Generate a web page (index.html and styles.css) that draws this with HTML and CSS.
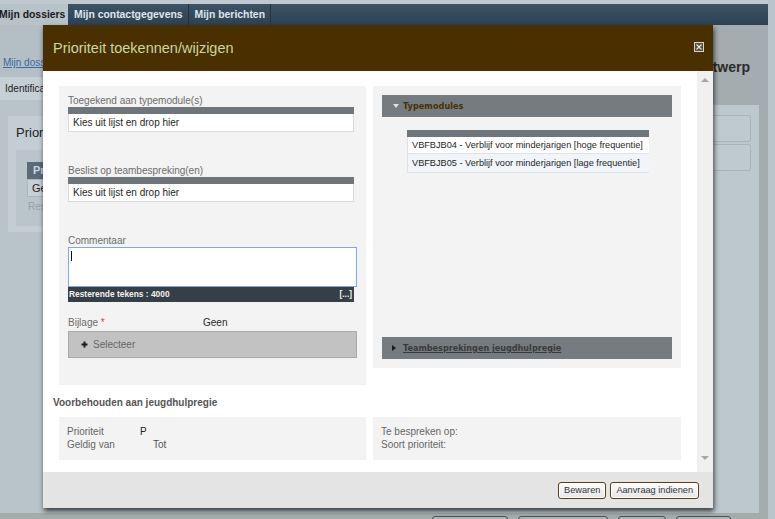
FILE: index.html
```html
<!DOCTYPE html>
<html lang="nl">
<head>
<meta charset="utf-8">
<title>Prioriteit toekennen/wijzigen</title>
<link rel="stylesheet" href="styles.css">
</head>
<body>
<div class="app">
  <div class="topstrip"></div>
  <nav class="nav">
    <span class="tab tab-active">Mijn dossiers</span>
    <span class="tab">Mijn contactgegevens</span>
    <span class="tab">Mijn berichten</span>
  </nav>
  <div class="content">
    <div class="maincol">
      <div class="crumbs"><a class="crumb-link">Mijn dossiers</a></div>
      <div class="subtabs"><span class="subtab">Identificatie</span></div>
      <section class="bgpanel">
        <h2 class="bgpanel-title">Prioriteit</h2>
        <div class="bgcard">
          <div class="bgth">Pr</div>
          <div class="bgtd">Ge</div>
          <div class="bgnote">Res</div>
        </div>
      </section>
    </div>
    <aside class="aside">
      <div class="aside-title"><span>Antwerp</span></div>
      <div class="aside-panel">
        <div class="aside-box"></div>
        <div class="aside-box"></div>
      </div>
    </aside>
  </div>
  <div class="bottombar">
    <span class="ghost-btn gb-a"></span>
    <span class="ghost-btn gb-b"></span>
    <span class="ghost-btn gb-c"></span>
    <span class="ghost-btn gb-d"></span>
  </div>
</div>

<div class="modal" role="dialog">
  <header class="modal-head">
    <h1 class="modal-title">Prioriteit toekennen/wijzigen</h1>
    <span class="modal-close">
      <svg width="10" height="10" viewBox="0 0 10 10">
        <rect x="0.5" y="0.5" width="9" height="9" fill="#5b4a2c" stroke="#d6d6d6"/>
        <path d="M2.5 2.5 L7.5 7.5 M7.5 2.5 L2.5 7.5" stroke="#e6e6e6" stroke-width="1.2"/>
      </svg>
    </span>
  </header>
  <div class="modal-body">
    <div class="modal-scroll">
      <div class="cols">
        <div class="panel panel-form">
          <div class="field">
            <div class="label">Toegekend aan typemodule(s)</div>
            <div class="dropbar"></div>
            <div class="dropbox">Kies uit lijst en drop hier</div>
          </div>
          <div class="field">
            <div class="label">Beslist op teambespreking(en)</div>
            <div class="dropbar"></div>
            <div class="dropbox">Kies uit lijst en drop hier</div>
          </div>
          <div class="field">
            <div class="label">Commentaar</div>
            <div class="textarea"><span class="caret"></span></div>
            <div class="counter"><span>Resterende tekens : 4000</span><span>[...]</span></div>
          </div>
          <div class="field field-attach">
            <div class="attach-row">
              <span class="label attach-label">Bijlage <span class="req">*</span></span>
              <span class="attach-value">Geen</span>
            </div>
            <div class="select-btn">
              <svg class="plus" width="7" height="7" viewBox="0 0 7 7"><path d="M3.5 0.5 V6.5 M0.5 3.5 H6.5" stroke="#1d1d1d" stroke-width="2"/></svg>
              <span>Selecteer</span>
            </div>
          </div>
        </div>
        <div class="panel panel-tree">
          <div class="acc-head"><span class="tri-down"></span><span class="acc-title">Typemodules</span></div>
          <div class="tm-table">
            <div class="tm-head"></div>
            <div class="tm-row">VBFBJB04 - Verblijf voor minderjarigen [hoge frequentie]</div>
            <div class="tm-row tm-alt">VBFBJB05 - Verblijf voor minderjarigen [lage frequentie]</div>
          </div>
          <div class="acc-head acc-closed"><span class="tri-right"></span><a class="acc-link">Teambesprekingen jeugdhulpregie</a></div>
        </div>
      </div>
      <h3 class="section-title">Voorbehouden aan jeugdhulpregie</h3>
      <div class="cols">
        <div class="panel panel-info">
          <div class="kv"><span class="k">Prioriteit</span><span class="v">P</span></div>
          <div class="kv"><span class="k k-wide">Geldig van</span><span class="k2">Tot</span></div>
        </div>
        <div class="panel panel-info">
          <div class="kv"><span class="k">Te bespreken op:</span></div>
          <div class="kv"><span class="k">Soort prioriteit:</span></div>
        </div>
      </div>
    </div>
    <div class="scrollbar"><span class="sb-up"></span><span class="sb-down"></span></div>
  </div>
  <footer class="modal-foot">
    <button class="btn" type="button">Bewaren</button>
    <button class="btn" type="button">Aanvraag indienen</button>
  </footer>
</div>
</body>
</html>
```

FILE: styles.css
```css
* { box-sizing: border-box; }
html, body { margin: 0; padding: 0; }
body {
  width: 775px;
  height: 519px;
  overflow: hidden;
  position: relative;
  background: #b9c4cb;
  font-family: "Liberation Sans", Arial, sans-serif;
  font-size: 10px;
  color: #333;
}

/* ---------- background application ---------- */
.app { width: 768px; height: 519px; display: flex; flex-direction: column; }
.topstrip { height: 4px; flex: none; background: #bfc9cf; }
.nav { height: 21px; flex: none; display: flex; background: linear-gradient(#3d5466, #2d4151); }
.tab {
  display: block;
  line-height: 21px;
  padding: 0 5px 0 6px;
  font-weight: bold;
  font-size: 10.4px;
  color: #dfe7ee;
  border-right: 1px solid #24323d;
  white-space: nowrap;
}
.tab-active { width: 68px; padding: 0; text-indent: -1px; background: #b7c2c9; color: #1b1b1b; border-right: 0; overflow: hidden; }

.content { flex: none; height: 488px; display: grid; grid-template-columns: 713px 55px; }
.maincol { background: #b8c3ca; display: flex; flex-direction: column; }
.crumbs { height: 52px; background: #b3bec5; padding: 32px 0 0 3px; }
.crumb-link { color: #3b6c9c; text-decoration: underline; font-size: 10px; }
.subtabs { height: 23px; background: #c6cfd4; padding: 6px 0 0 5px; }
.subtab { color: #222; font-size: 10px; }
.bgpanel { margin: 16px 0 0 8px; height: 116px; background: #c3cdd3; padding: 9px 0 0 8px; }
.bgpanel-title { margin: 0; font-size: 13px; font-weight: normal; color: #222; line-height: 16px; }
.bgcard { margin-top: 9px; width: 600px; height: 76px; background: #bac4cb; padding: 12px 0 0 11px; }
.bgth { height: 17px; background: #5a6a77; color: #c9d6e2; font-weight: bold; padding-left: 6px; line-height: 17px; font-size: 11px; }
.bgtd { height: 18px; background: #c7d0d5; border: 1px solid #aab5bc; padding-left: 4px; line-height: 16px; font-size: 11px; color: #222; }
.bgnote { margin-top: 4px; color: #97a2a9; font-size: 10px; padding-left: 1px; }

.aside { background: #a4acb0; display: flex; flex-direction: column; }
.aside-title {
  height: 80px;
  display: flex;
  justify-content: flex-end;
  padding: 34px 18px 0 0;
  font-size: 14px;
  font-weight: bold;
  color: #2b2b2b;
  line-height: 16px;
  white-space: nowrap;
}
.aside-panel { flex: 1; margin-right: 9px; background: #bcc7ce; padding: 10px 8px 0 0; }
.aside-box { height: 27px; border: 1px solid #a9b3b9; border-left: 0; border-radius: 0 3px 3px 0; background: #bfcad0; margin-bottom: 2px; }

.bottombar { flex: 1; background: #a4acac; display: flex; gap: 10px; padding: 3px 0 0 432px; }
.ghost-btn { height: 18px; border: 1px solid #4d5252; border-radius: 3px; background: #adb5b6; }
.gb-a { width: 76px; }
.gb-b { width: 90px; }
.gb-c { width: 48px; }
.gb-d { width: 55px; }

/* ---------- modal dialog ---------- */
.modal {
  position: absolute;
  left: 43px;
  top: 25px;
  width: 670px;
  height: 483px;
  display: flex;
  flex-direction: column;
  background: #fff;
  box-shadow: 1px 3px 5px rgba(0, 0, 0, 0.7);
}
.modal-head {
  height: 46px;
  flex: none;
  background: #4a2f00;
  display: flex;
  align-items: center;
  justify-content: space-between;
  padding: 0 9px 0 10px;
}
.modal-title { margin: 0; font-size: 14.5px; font-weight: normal; color: #c9d7a3; }
.modal-close { display: flex; margin-bottom: 3px; }

.modal-body { flex: 1; min-height: 0; display: flex; }
.modal-scroll { flex: 1; overflow: hidden; padding: 15px 16px 0 16px; }
.scrollbar {
  width: 16px;
  background: #f0f0f0;
  display: flex;
  flex-direction: column;
  justify-content: space-between;
  align-items: center;
  padding: 7px 0 12px 0;
}
.sb-up { width: 0; height: 0; border-left: 4px solid transparent; border-right: 4px solid transparent; border-bottom: 4px solid #a6a6a6; }
.sb-down { width: 0; height: 0; border-left: 4px solid transparent; border-right: 4px solid transparent; border-top: 4px solid #a6a6a6; }

.cols { display: grid; grid-template-columns: 307px 308px; column-gap: 7px; align-items: start; }
.panel { background: #f3f3f3; }

/* left form */
.panel-form { padding: 9px 9px 27px 9px; display: flex; flex-direction: column; gap: 33px; }
.field { display: flex; flex-direction: column; }
.label { color: #6c6c6c; font-size: 10px; line-height: 12px; }
.dropbar { width: 286px; height: 7px; background: #6f767b; }
.dropbox {
  width: 286px;
  height: 18px;
  background: #fff;
  border: 1px solid #d9d9d9;
  border-top: 0;
  padding-left: 4px;
  line-height: 17px;
  color: #262626;
  font-size: 10px;
}
.textarea { height: 40px; background: #fff; border: 1px solid #84a6de; padding: 3px 0 0 2px; }
.caret { display: block; width: 1px; height: 10px; background: #111; }
.counter {
  width: 286px;
  height: 15px;
  background: #363f47;
  color: #f2f2f2;
  font-weight: bold;
  font-size: 8.4px;
  line-height: 15px;
  display: flex;
  justify-content: space-between;
  padding: 0 2px 0 1px;
}
.field-attach { margin-top: -18px; }
.attach-row { display: flex; line-height: 12px; }
.attach-label { width: 135px; }
.req { color: #e2403a; }
.attach-value { color: #2a2a2a; }
.select-btn {
  margin-top: 2px;
  height: 27px;
  background: #c2c2c2;
  border: 1px solid #a9a9a9;
  display: flex;
  align-items: center;
  gap: 5px;
  padding-left: 12px;
  color: #666;
  font-size: 10px;
}

/* right tree */
.panel-tree { height: 282px; padding: 9px; display: flex; flex-direction: column; }
.acc-head { height: 22px; flex: none; background: #757c81; display: flex; align-items: center; padding-left: 11px; }
.tri-down { width: 0; height: 0; border-left: 3px solid transparent; border-right: 3px solid transparent; border-top: 4px solid #e2e2e2; margin-right: 4px; }
.tri-right { width: 0; height: 0; border-top: 3px solid transparent; border-bottom: 3px solid transparent; border-left: 4px solid #1b1b1b; margin-right: 7px; }
.acc-title { font-family: "DejaVu Sans", Verdana, sans-serif; font-weight: bold; font-size: 8.2px; color: #4a3000; }
.acc-link { font-family: "DejaVu Sans", Verdana, sans-serif; font-weight: bold; font-size: 8.1px; color: #3a3a3a; text-decoration: underline; }
.acc-closed { margin-top: auto; padding-left: 10px; }
.tm-table { width: 242px; margin: 13px 0 0 25px; }
.tm-head { height: 7px; background: #6f767b; }
.tm-row {
  height: 17px;
  background: #fff;
  border-left: 1px solid #dfe3e8;
  border-bottom: 1px solid #dfe3e8;
  padding-left: 4px;
  line-height: 16px;
  font-size: 9.2px;
  color: #1f1f1f;
  white-space: nowrap;
}
.tm-alt { height: 19px; background: #f1f5fa; line-height: 18px; }

/* bottom section */
.section-title { margin: 12px 0 0 -6px; font-size: 10px; line-height: 12px; font-weight: bold; color: #555; }
.section-title + .cols { margin-top: 8px; }
.panel-info { height: 43px; padding: 8px 9px 0 8px; }
.kv { display: flex; line-height: 13px; color: #666; }
.k { display: block; width: 73px; white-space: nowrap; }
.k-wide { width: 86px; }
.v { color: #222; }
.k2 { color: #555; }

.modal-foot {
  height: 36px;
  flex: none;
  background: #e4e4e4;
  display: flex;
  justify-content: flex-end;
  align-items: center;
  gap: 4px;
  padding-right: 14px;
}
.btn {
  height: 17px;
  padding: 0 5px;
  border: 1px solid #5c3d12;
  border-radius: 3px;
  background: linear-gradient(#fefefe, #e6e6e6);
  box-shadow: inset 0 0 0 1px #fff;
  font-family: "Liberation Sans", Arial, sans-serif;
  font-size: 9.2px;
  color: #333;
  line-height: 15px;
}
```
